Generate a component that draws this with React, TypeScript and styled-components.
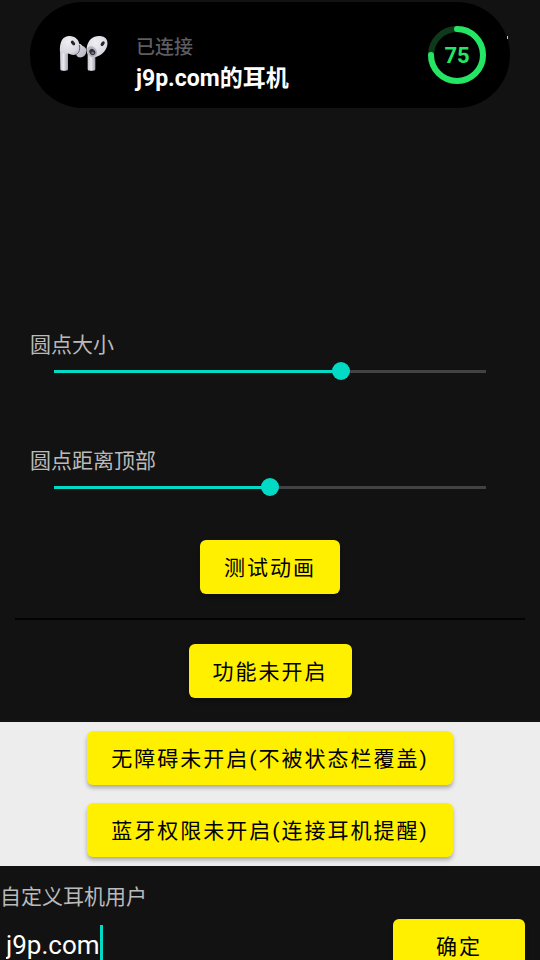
import React, { useId, useState } from "react";
import styled, { createGlobalStyle } from "styled-components";

const GlobalStyle = createGlobalStyle`
  html { scrollbar-width: none; background: #121212; }
  body { margin: 0; }
  *, *::before, *::after { box-sizing: border-box; }
  #root, button, input {
    font-family: Roboto, "Noto Sans CJK SC", sans-serif;
  }
`;

const Page = styled.main`
  display: flex;
  flex-direction: column;
  color: #bababa;
  background: #121212;
  font-size: 21px;
  line-height: 30px;
`;

const Header = styled.header`
  position: relative;
  display: flex;
  padding: 2px 30px 0;
  margin-bottom: 222px;
`;

const StatusSpeck = styled.span`
  position: absolute;
  top: 36px;
  right: 32px;
  width: 1px;
  height: 3px;
  background: #c8c8c8;
`;

const Island = styled.section`
  display: flex;
  flex: 1;
  align-items: center;
  gap: 16px;
  height: 106px;
  padding: 0 24px 0 15px;
  border-radius: 53px;
  background: #000;
`;

const IslandText = styled.div`
  display: flex;
  flex: 1;
  flex-direction: column;
  padding-top: 20px;
`;

const Status = styled.span`
  color: #5e5e62;
  font-size: 19px;
  font-weight: 500;
  line-height: 28px;
`;

const DeviceName = styled.strong`
  color: #fff;
  font-size: 23px;
  font-weight: 700;
  line-height: 34px;
`;

const Battery = styled.div`
  display: grid;
  place-items: center;
  color: #25e664;
  font-size: 22px;
  font-weight: 700;
  line-height: 32px;

  > * { grid-area: 1 / 1; }
`;

const Percent = styled.span`
  padding-top: 2px;
`;

const Sliders = styled.div`
  display: flex;
  flex-direction: column;
  gap: 65px;
  margin-bottom: 43px;
  padding: 0 30px;
`;

const SliderGroup = styled.div`
  display: flex;
  flex-direction: column;
`;

const Range = styled.input`
  appearance: none;
  height: 20px;
  margin: 1px 15px 0;
  background: transparent;

  &::-webkit-slider-runnable-track {
    height: 3px;
    background:
      linear-gradient(#03dac5, #03dac5) 9px 0 / calc((100% - 18px) * var(--fill)) 3px no-repeat,
      linear-gradient(#424242, #424242) 9px 0 / calc(100% - 18px) 3px no-repeat;
  }

  &::-webkit-slider-thumb {
    appearance: none;
    width: 18px;
    height: 18px;
    margin-top: -8px;
    border-radius: 50%;
    background: #03dac5;
  }
`;

const Button = styled.button<{ $wide?: boolean }>`
  height: 54px;
  padding: 0 24px 2px;
  min-width: ${(p) => (p.$wide ? "132px" : "0")};
  border: 0;
  border-radius: 6px;
  color: #000;
  background: #fff000;
  box-shadow: 0 3px 4px rgba(0, 0, 0, 0.28);
  font-size: 21px;
  font-weight: 400;
  letter-spacing: 2px;
`;

const Actions = styled.div`
  display: flex;
  flex-direction: column;
  align-items: center;
`;

const Divider = styled.hr`
  align-self: stretch;
  height: 2px;
  margin: 24px 15px;
  border: 0;
  background: #030303;
`;

const Permissions = styled.section`
  display: flex;
  flex-direction: column;
  align-items: center;
  gap: 18px;
  margin-top: 24px;
  padding: 9px 0;
  background: #ededed;
`;

const UserForm = styled.form`
  display: flex;
  flex-direction: column;
  padding: 16px 15px 0 0;
`;

const FormRow = styled.div`
  display: flex;
  justify-content: space-between;
  align-items: flex-start;
  margin-top: 7px;
`;

const Field = styled.div`
  display: flex;
  align-items: center;
  flex: 1;
  padding: 6px 6px 0;
`;

const NameInput = styled.input`
  field-sizing: content;
  height: 40px;
  padding: 0;
  border: 0;
  outline: 0;
  color: #fff;
  background: transparent;
  caret-color: transparent;
  font-size: 26px;
`;

const Caret = styled.span`
  width: 3px;
  height: 40px;
  background: #03dac5;
`;

function Earbuds() {
  return (
    <svg width="75" height="60" viewBox="0 0 225 180" aria-label="耳机" role="img">
      <defs>
        <linearGradient id="stem" x1="0" x2="1" y1="0" y2="0">
          <stop offset="0" stopColor="#c9c8d0" />
          <stop offset="0.45" stopColor="#e9e8ee" />
          <stop offset="1" stopColor="#a2a1ab" />
        </linearGradient>
        <radialGradient id="head" cx="0.42" cy="0.3" r="0.85">
          <stop offset="0" stopColor="#efeef3" />
          <stop offset="0.7" stopColor="#d9d8e0" />
          <stop offset="1" stopColor="#a9a8b3" />
        </radialGradient>
        <linearGradient id="tip" x1="0" x2="1" y1="0" y2="1">
          <stop offset="0" stopColor="#dddce4" />
          <stop offset="1" stopColor="#b3b2bd" />
        </linearGradient>
      </defs>
      <path d="M45 72 L69 82 V132 Q69 138 57 138 Q46 138 46 132 Z" fill="url(#stem)" />
      <path d="M49 135 Q57 139 66 135 V138 H49 Z" fill="#55545c" />
      <path d="M45 82 C43 54 51 34 71 33 C90 32 103 44 103 61 C104 78 97 91 85 90 C77 90 69 83 66 87 Z" fill="url(#head)" />
      <path d="M98 57 Q108 55 112 62 Q125 68 124 76 Q124 94 109 97 Q98 99 93 89 Q100 76 98 57 Z" fill="url(#tip)" />
      <path d="M103 60 Q108 79 94 89" fill="none" stroke="#65646e" strokeWidth="3" />
      <ellipse cx="84" cy="54" rx="5" ry="8" transform="rotate(-42 84 54)" fill="#24232b" />
      <path d="M128 87 L151 91 V132 Q151 138 139 138 Q128 138 128 132 Z" fill="url(#stem)" />
      <path d="M131 135 Q139 139 148 135 V138 H131 Z" fill="#55545c" />
      <path d="M125 69 C128 46 143 33 162 33 C180 32 190 44 187 60 C183 81 165 94 146 98 C130 97 123 85 125 69 Z" fill="url(#head)" />
      <ellipse cx="141" cy="80" rx="14" ry="17" transform="rotate(-35 141 80)" fill="#b3b2bd" />
      <ellipse cx="142" cy="81" rx="8" ry="10" transform="rotate(-40 142 81)" fill="#302f38" />
      <ellipse cx="143" cy="84" rx="4" ry="4" fill="#777681" />
      <ellipse cx="173" cy="56" rx="5" ry="8" transform="rotate(35 173 56)" fill="#24232b" />
    </svg>
  );
}

function BatteryRing({ value }: { value: number }) {
  return (
    <Battery>
      <svg width="58" height="58" viewBox="0 0 58 58" aria-hidden="true">
        <circle cx="29" cy="29" r="26" fill="none" stroke="#0e3a1b" strokeWidth="6" />
        <circle
          cx="29" cy="29" r="26" fill="none" stroke="#25e664" strokeWidth="6"
          strokeLinecap="round" pathLength="100" strokeDasharray={`${value} 100`}
          transform="rotate(-90 29 29)"
        />
      </svg>
      <Percent>{value}</Percent>
    </Battery>
  );
}

function LabeledSlider({ label, initial }: { label: string; initial: number }) {
  const id = useId();
  const [value, setValue] = useState(initial);
  return (
    <SliderGroup>
      <label htmlFor={id}>{label}</label>
      <Range
        id={id}
        type="range"
        min={0}
        max={200}
        value={value}
        onChange={(e) => setValue(Number(e.target.value))}
        style={{ "--fill": value / 200 } as React.CSSProperties}
      />
    </SliderGroup>
  );
}

export default function App() {
  const [name, setName] = useState("j9p.com");
  return (
    <>
      <GlobalStyle />
      <Page>
        <Header>
          <Island>
            <Earbuds />
            <IslandText>
              <Status>已连接</Status>
              <DeviceName>j9p.com的耳机</DeviceName>
            </IslandText>
            <BatteryRing value={75} />
          </Island>
          <StatusSpeck />
        </Header>
        <Sliders>
          <LabeledSlider label="圆点大小" initial={133} />
          <LabeledSlider label="圆点距离顶部" initial={100} />
        </Sliders>
        <Actions>
          <Button type="button">测试动画</Button>
          <Divider />
          <Button type="button">功能未开启</Button>
        </Actions>
        <Permissions>
          <Button type="button">无障碍未开启(不被状态栏覆盖)</Button>
          <Button type="button">蓝牙权限未开启(连接耳机提醒)</Button>
        </Permissions>
        <UserForm onSubmit={(e) => e.preventDefault()}>
          <label htmlFor="user-name">自定义耳机用户</label>
          <FormRow>
            <Field>
              <NameInput id="user-name" value={name} onChange={(e) => setName(e.target.value)} />
              <Caret />
            </Field>
            <Button type="submit" $wide>确定</Button>
          </FormRow>
        </UserForm>
      </Page>
    </>
  );
}
